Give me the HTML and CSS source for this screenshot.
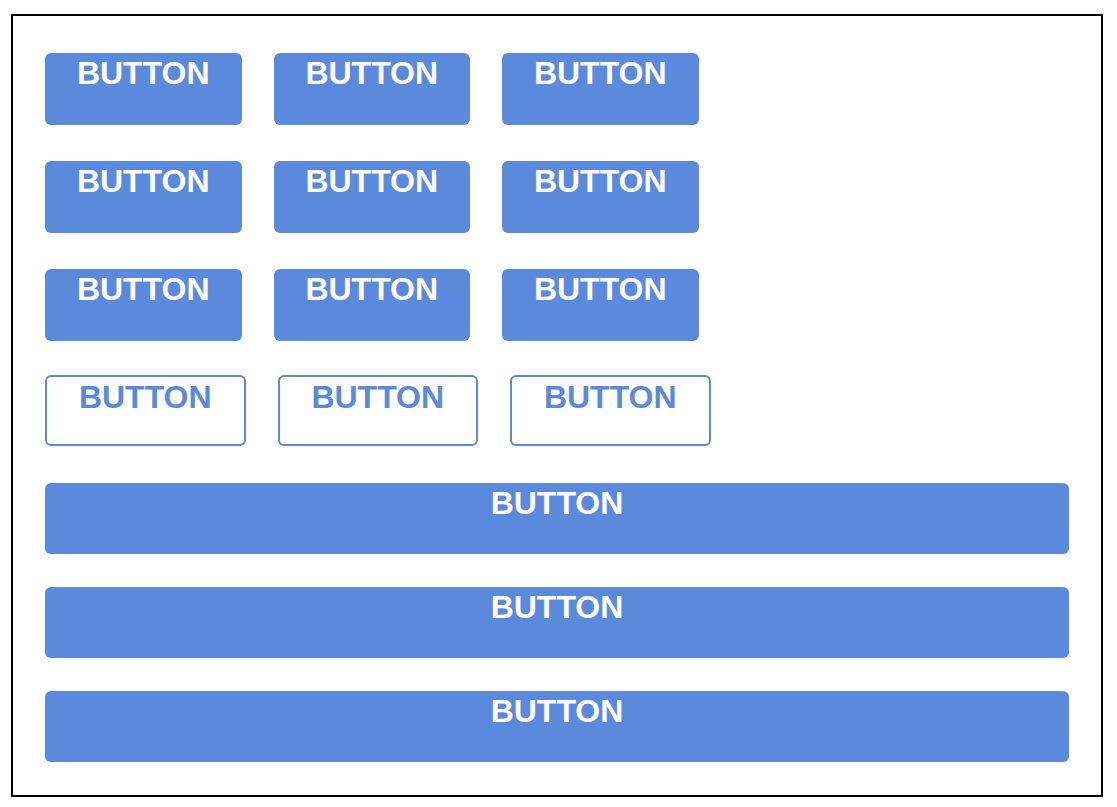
FILE: index.html
```html
<!DOCTYPE html>
<html lang="en">
<head>
<meta charset="utf-8">
<title>Buttons</title>
<link rel="stylesheet" href="styles.css">
</head>
<body>
<div class="frame">
  <div class="grid-rows">
    <div class="row">
      <button class="btn btn-fill btn-small"><span class="label">BUTTON</span></button>
      <button class="btn btn-fill btn-small"><span class="label">BUTTON</span></button>
      <button class="btn btn-fill btn-small"><span class="label">BUTTON</span></button>
    </div>
    <div class="row">
      <button class="btn btn-fill btn-small"><span class="label">BUTTON</span></button>
      <button class="btn btn-fill btn-small"><span class="label">BUTTON</span></button>
      <button class="btn btn-fill btn-small"><span class="label">BUTTON</span></button>
    </div>
    <div class="row">
      <button class="btn btn-fill btn-small"><span class="label">BUTTON</span></button>
      <button class="btn btn-fill btn-small"><span class="label">BUTTON</span></button>
      <button class="btn btn-fill btn-small"><span class="label">BUTTON</span></button>
    </div>
  </div>
  <div class="row row-outline">
    <button class="btn btn-outline"><span class="label">BUTTON</span></button>
    <button class="btn btn-outline"><span class="label">BUTTON</span></button>
    <button class="btn btn-outline"><span class="label">BUTTON</span></button>
  </div>
  <div class="wide-rows">
    <button class="btn btn-fill btn-wide"><span class="label">BUTTON</span></button>
    <button class="btn btn-fill btn-wide"><span class="label">BUTTON</span></button>
    <button class="btn btn-fill btn-wide"><span class="label">BUTTON</span></button>
  </div>
</div>
</body>
</html>
```

FILE: styles.css
```css
html, body {
  margin: 0;
  padding: 0;
  background: #ffffff;
}

.frame {
  box-sizing: border-box;
  width: 1092px;
  height: 783px;
  margin: 14px 0 0 11px;
  border: 2px solid #000000;
  padding: 37px 32px 33px 32px;
  display: flex;
  flex-direction: column;
}

.grid-rows {
  display: flex;
  flex-direction: column;
  gap: 36px;
}

.row {
  display: flex;
  gap: 32px;
}

.row-outline {
  margin-top: 34px;
}

.wide-rows {
  margin-top: 37px;
  display: flex;
  flex-direction: column;
  gap: 33px;
}

.btn {
  box-sizing: border-box;
  margin: 0;
  font-family: "Liberation Sans", Arial, sans-serif;
  font-weight: bold;
  font-size: 32px;
  line-height: 32px;
  text-align: center;
  border-radius: 6px;
  cursor: pointer;
  display: flex;
  align-items: flex-start;
  justify-content: center;
}

.label {
  display: block;
}

.btn-fill {
  background: #5b89dc;
  color: #ffffff;
  border: none;
  padding: 4px 0 0 0;
}

.btn-small {
  width: 196.5px;
  height: 72px;
}

.btn-outline {
  width: 200.5px;
  height: 71px;
  background: #ffffff;
  color: #5b89dc;
  border: 2px solid #5b89dc;
  padding: 4px 0 0 0;
}

.btn-wide {
  width: 100%;
  height: 71px;
}
```
